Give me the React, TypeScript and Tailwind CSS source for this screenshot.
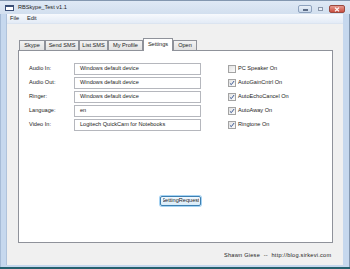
import React from "react";

const rows: [string, string, string, boolean][] = [
  ["Audio In:", "Windows default device", "PC Speaker On", false],
  ["Audio Out:", "Windows default device", "AutoGainCntrl On", true],
  ["Ringer:", "Windows default device", "AutoEchoCancel On", true],
  ["Language:", "en", "AutoAway On", true],
  ["Video In:", "Logitech QuickCam for Notebooks", "Ringtone On", true],
];

const tabs: [string, string][] = [
  ["Skype", "w-[26px]"],
  ["Send SMS", "w-[34px]"],
  ["List SMS", "w-[29px]"],
  ["My Profile", "w-[35px]"],
  ["Settings", "w-[30px]"],
  ["Open", "w-[24px]"],
];

function Check({ checked }: { checked: boolean }) {
  return (
    <div className="w-[8px] h-[8px] border border-[#a3a3a3] bg-gradient-to-br from-[#e2e2e2] to-[#fbfbfb] flex items-center justify-center">
      {checked && (
        <svg width="6" height="6" viewBox="0 0 6 6">
          <path d="M0.9 3.3 L2.3 4.7 L5.1 1" stroke="#3d5a96" strokeWidth="1" fill="none" />
        </svg>
      )}
    </div>
  );
}

export default function App() {
  return (
    <div className="w-[350px] h-[269px] flex flex-col bg-[#c6d8ee] overflow-hidden font-['Liberation_Sans',Arial,sans-serif] text-[5.6px] leading-none text-[#1c1c1c]">
      {/* Title bar */}
      <div className="h-[14px] flex items-center pl-[5px] pr-[5px] border-t border-[#8397b0] bg-gradient-to-b from-[#dfe9f5] to-[#d2dfef]">
        <div className="w-[9px] h-[6px] border border-[#3a4f77] border-t-[2px] bg-white" />
        <span className="ml-[4px] text-[5.6px]">RBSkype_Test v1.1</span>
        <div className="flex-1" />
        <div className="flex items-start self-start mt-[4px]">
          <div className="w-[14px] h-[8px] rounded-[2px] border border-[#8ea2be] bg-gradient-to-b from-[#e9f0f8] to-[#c9d8eb] flex items-center justify-center">
            <div className="w-[5px] h-[2px] bg-white border border-[#5d6d88] mt-[2px]" />
          </div>
          <div className="w-[14px] h-[8px] ml-[1px] flex items-center justify-center">
            <div className="w-[5px] h-[4px] border border-[#8a97ab] bg-[#e8eef6]" />
          </div>
          <div className="w-[16px] h-[8px] ml-[2px] rounded-[2px] border border-[#9a4a40] bg-gradient-to-b from-[#e69a90] to-[#c94c3f] flex items-center justify-center">
            <svg width="6" height="5" viewBox="0 0 6 5">
              <path d="M1 0.6 L5 4.4 M5 0.6 L1 4.4" stroke="#ffffff" strokeWidth="1.3" />
            </svg>
          </div>
        </div>
      </div>

      {/* Frame body */}
      <div className="flex-1 flex pl-[5px] pr-[6px] pb-[2px] border-l border-r border-[#8397b0] border-l-[#a7bcd7]">
        <div className="flex-1 flex flex-col bg-[#f0f0f0] border-l border-[#b0c3db]">
          {/* Menu bar */}
          <div className="h-[10px] flex items-center gap-[8px] pl-[3px] bg-gradient-to-b from-[#f7f9fd] to-[#e3ebf6] border-b border-[#dbe4f0]">
            <span>File</span>
            <span>Edit</span>
          </div>

          {/* Client */}
          <div className="flex-1 flex flex-col pt-[14px] pl-[11px] pr-[10px]">
            {/* Tabs */}
            <div className="h-[12px] flex items-end pl-[1px] relative z-10">
              {tabs.map(([t, w]) =>
                t === "Settings" ? (
                  <div
                    key={t}
                    className={`${w} h-[13px] -mb-[1px] bg-white border border-b-0 border-[#8f929a] flex items-start justify-center pt-[3px]`}
                  >
                    {t}
                  </div>
                ) : (
                  <div
                    key={t}
                    className={`${w} h-[10px] bg-gradient-to-b from-[#f3f3f3] to-[#e2e2e2] border border-b-0 border-[#8f929a] flex items-center justify-center`}
                  >
                    {t}
                  </div>
                )
              )}
            </div>

            {/* Panel */}
            <div className="h-[193px] bg-white border border-[#8f929a] flex flex-col pt-[12px] pl-[10px]">
              <div className="flex flex-col gap-[2px]">
                {rows.map(([label, value, cb, checked]) => (
                  <div key={label} className="h-[12px] flex items-center">
                    <div className="w-[45px]">{label}</div>
                    <div className="w-[127px] h-[12px] border border-[#b5b7bd] bg-white flex items-center pl-[5px] whitespace-nowrap overflow-hidden">
                      {value}
                    </div>
                    <div className="ml-[27px]">
                      <Check checked={checked} />
                    </div>
                    <div className="ml-[2px]">{cb}</div>
                  </div>
                ))}
              </div>

              <button className="mt-[65px] ml-[131px] w-[41px] h-[10px] rounded-[2px] border border-[#3c7fb1] bg-gradient-to-b from-[#f3f9fe] to-[#d8ebf8] shadow-[0_0_0_1px_#a6d3f3] flex items-center justify-center p-0 text-[#1c1c1c]">
                <div className="w-[36px] overflow-hidden flex justify-center">
                  <span className="whitespace-nowrap text-[5.6px] leading-none">SettingRequest</span>
                </div>
              </button>
            </div>

            {/* Footer */}
            <div className="flex-1 flex pt-[10px]">
              <div className="ml-[206px] w-[108px] overflow-hidden whitespace-pre tracking-[0.25px]">
                Shawn Giese  --  http://blog.sirkevi.com
              </div>
            </div>
          </div>
        </div>
      </div>

      {/* Bottom edge */}
      <div className="h-[2px] bg-[#25606e]" />
    </div>
  );
}
